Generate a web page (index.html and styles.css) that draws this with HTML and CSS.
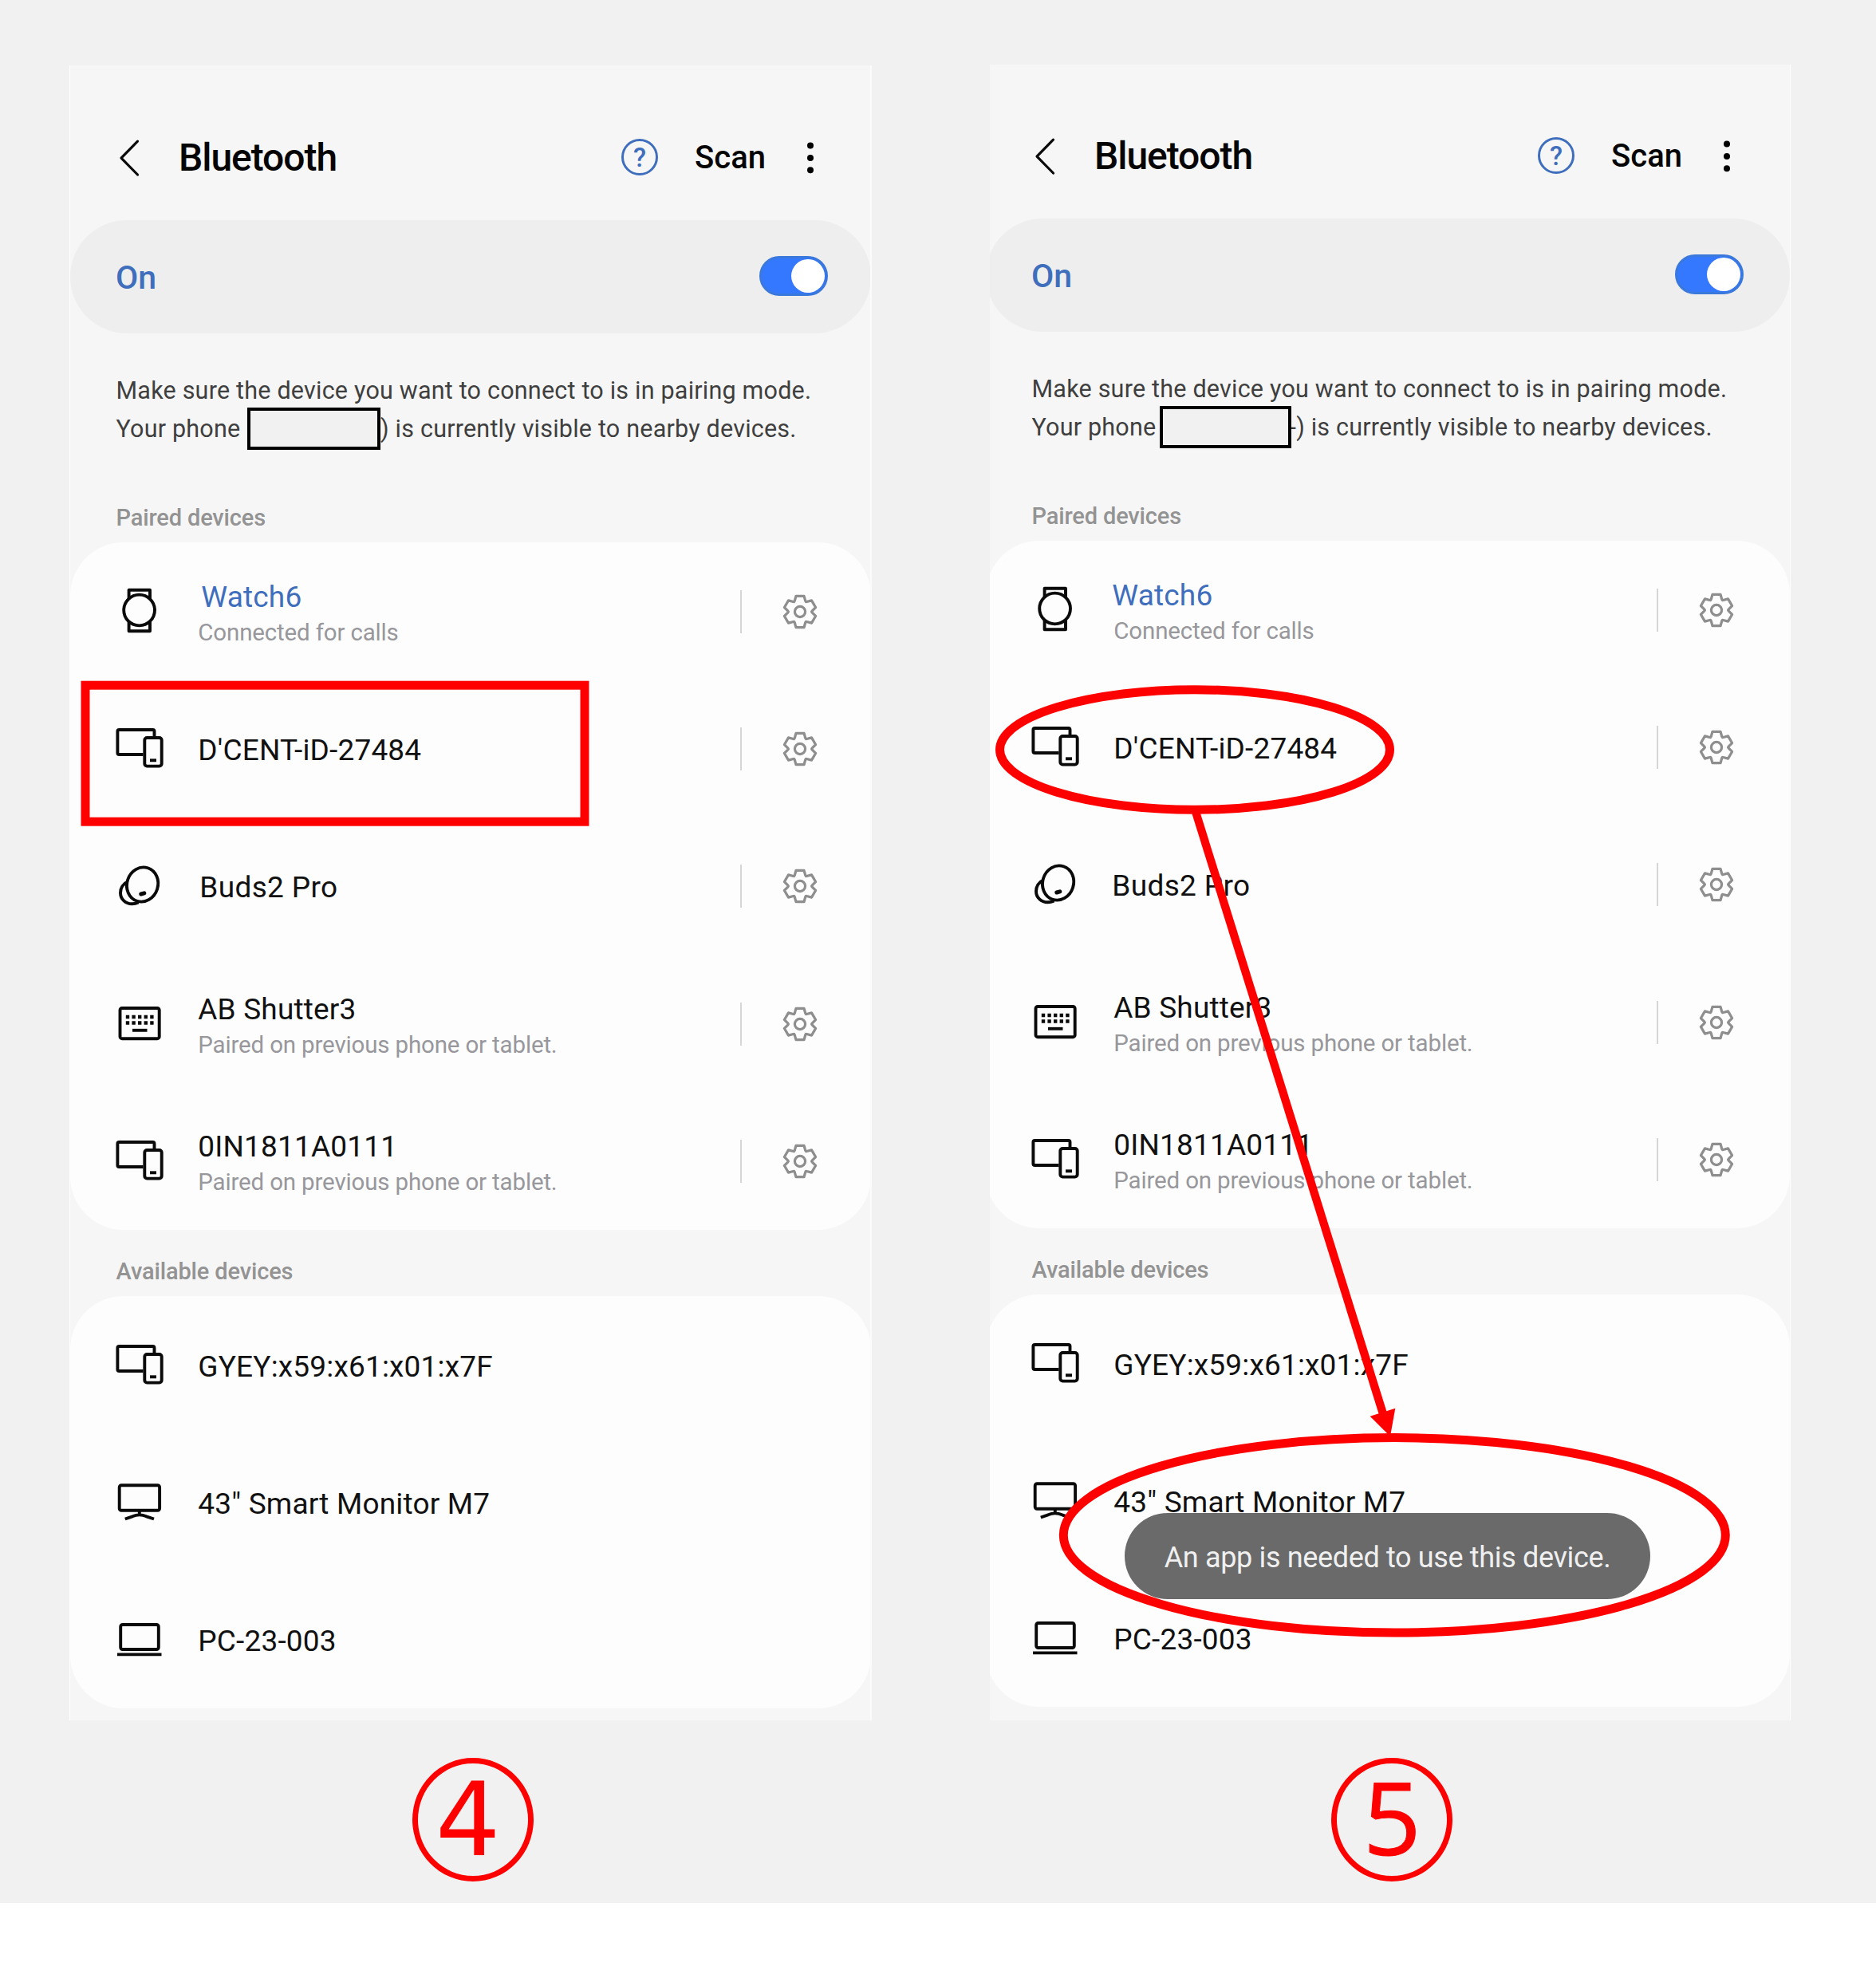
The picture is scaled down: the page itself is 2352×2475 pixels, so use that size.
FILE: index.html
```html
<!DOCTYPE html>
<html lang="en">
<head>
<meta charset="utf-8">
<title>Bluetooth pairing guide</title>
<link rel="stylesheet" href="styles.css">
</head>
<body>
<svg class="sprite" aria-hidden="true">
  <symbol id="back" viewBox="-32 -32 64 64"><path d="M10.5-20.8-10 .2 10.5 21"/></symbol>
  <symbol id="more" viewBox="-10 -32 20 64"><circle cy="-15.5" r="4"/><circle r="4"/><circle cy="15.3" r="4"/></symbol>
  <symbol id="watch" viewBox="-32 -32 64 64"><circle cx="-.4" cy="-2" r="19.4"/><path d="M-13.4-16.2V-27.2H13V-16.2M-13.4 12.4V24.2H13V12.4"/></symbol>
  <symbol id="devices" viewBox="-32 -32 64 64"><path d="M4.5 7H-25.5Q-27.6 7-27.6 5V-22Q-27.6-24-25.5-24H16.5Q18.5-24 18.5-22V-15"/><rect x="6.3" y="-14" width="21.4" height="35.6" rx="3"/><path d="M13 14.3h8"/></symbol>
  <symbol id="buds" viewBox="-32 -32 64 64"><ellipse cx="3.6" cy="-2" rx="19.4" ry="21.8" transform="rotate(18 3.6 -2)"/><path d="M-14.6-5.6C-21-3-24 3-24 8.5-24 16.5-17.5 22.3-9.5 22.3-6.5 22.3-4 21.6-1.5 20.4"/><path class="thick" d="M1.8 10 5.8 8.8"/></symbol>
  <symbol id="keyboard" viewBox="-32 -32 64 64"><rect x="-24.5" y="-20" width="49.2" height="38.2" rx="2.5"/><path class="keys" d="M-17.2-9H18M-17.2-1.5H18"/><path d="M-9 7.8H9.5"/></symbol>
  <symbol id="monitor" viewBox="-32 -32 64 64"><rect x="-25.3" y="-21.8" width="50.4" height="31.6" rx="2.5"/><path d="M-.2 10V15.5M-18.2 20.5-9 17.3Q-.2 13.5 8.6 17.3L18 20.5"/></symbol>
  <symbol id="laptop" viewBox="-32 -32 64 64"><rect x="-23.8" y="-19" width="47.6" height="31" rx="2.5"/><path d="M-28 18.4H27.5"/></symbol>
  <symbol id="gear" viewBox="-32 -32 64 64"><circle r="7.8"/><path d="M-8-16-6-23.3H6L8-16Q8.7-14.2 9.9-14.9L17.2-16.8 23.2-6.5 17.9-1.1Q16.7 0 17.9 1.1L23.2 6.5 17.2 16.8 9.9 14.9Q8.7 14.2 8 16L6 23.3H-6L-8 16Q-8.7 14.2-9.9 14.9L-17.2 16.8-23.2 6.5-17.9 1.1Q-16.7 0-17.9-1.1L-23.2-6.5-17.2-16.8-9.9-14.9Q-8.7-14.2-8-16Z"/></symbol>
</svg>

<main class="board">
  <section class="step">
    <div class="phone phone-a">
      <div class="screen">
        <header class="bar">
          <svg class="icon back"><use href="#back"/></svg>
          <h1 class="title">Bluetooth</h1>
          <span class="help">?</span>
          <span class="scan">Scan</span>
          <svg class="more"><use href="#more"/></svg>
        </header>
        <div class="power"><span class="on">On</span><span class="toggle"><i class="knob"></i></span></div>
        <div class="note">
          <div class="line">Make sure the device you want to connect to is in pairing mode.</div>
          <div class="line"><span class="lead">Your phone</span><span class="mask"></span><span class="tail">) is currently visible to nearby devices.</span></div>
        </div>
        <h2 class="label">Paired devices</h2>
        <ul class="card">
          <li class="row"><svg class="icon"><use href="#watch"/></svg><div class="text"><div class="name linked">Watch6</div><div class="sub">Connected for calls</div></div><svg class="icon gear"><use href="#gear"/></svg></li>
          <li class="row"><svg class="icon"><use href="#devices"/></svg><div class="text"><div class="name">D'CENT-iD-27484</div></div><svg class="icon gear"><use href="#gear"/></svg></li>
          <li class="row"><svg class="icon"><use href="#buds"/></svg><div class="text"><div class="name buds">Buds2 Pro</div></div><svg class="icon gear"><use href="#gear"/></svg></li>
          <li class="row"><svg class="icon"><use href="#keyboard"/></svg><div class="text"><div class="name">AB Shutter3</div><div class="sub">Paired on previous phone or tablet.</div></div><svg class="icon gear"><use href="#gear"/></svg></li>
          <li class="row"><svg class="icon"><use href="#devices"/></svg><div class="text"><div class="name">0IN1811A0111</div><div class="sub">Paired on previous phone or tablet.</div></div><svg class="icon gear"><use href="#gear"/></svg></li>
        </ul>
        <h2 class="label available">Available devices</h2>
        <ul class="card">
          <li class="row"><svg class="icon"><use href="#devices"/></svg><div class="text"><div class="name">GYEY:x59:x61:x01:x7F</div></div></li>
          <li class="row"><svg class="icon"><use href="#monitor"/></svg><div class="text"><div class="name">43" Smart Monitor M7</div></div></li>
          <li class="row"><svg class="icon"><use href="#laptop"/></svg><div class="text"><div class="name">PC-23-003</div></div></li>
        </ul>
      </div>
    </div>
    <div class="badge">4</div>
  </section>

  <section class="step">
    <div class="phone phone-b">
      <div class="screen">
        <header class="bar">
          <svg class="icon back"><use href="#back"/></svg>
          <h1 class="title">Bluetooth</h1>
          <span class="help">?</span>
          <span class="scan">Scan</span>
          <svg class="more"><use href="#more"/></svg>
        </header>
        <div class="power"><span class="on">On</span><span class="toggle"><i class="knob"></i></span></div>
        <div class="note">
          <div class="line">Make sure the device you want to connect to is in pairing mode.</div>
          <div class="line"><span class="lead">Your phone</span><span class="mask"></span><span class="tail">-) is currently visible to nearby devices.</span></div>
        </div>
        <h2 class="label">Paired devices</h2>
        <ul class="card">
          <li class="row"><svg class="icon"><use href="#watch"/></svg><div class="text"><div class="name linked">Watch6</div><div class="sub">Connected for calls</div></div><svg class="icon gear"><use href="#gear"/></svg></li>
          <li class="row"><svg class="icon"><use href="#devices"/></svg><div class="text"><div class="name">D'CENT-iD-27484</div></div><svg class="icon gear"><use href="#gear"/></svg></li>
          <li class="row"><svg class="icon"><use href="#buds"/></svg><div class="text"><div class="name buds">Buds2 Pro</div></div><svg class="icon gear"><use href="#gear"/></svg></li>
          <li class="row"><svg class="icon"><use href="#keyboard"/></svg><div class="text"><div class="name">AB Shutter3</div><div class="sub">Paired on previous phone or tablet.</div></div><svg class="icon gear"><use href="#gear"/></svg></li>
          <li class="row"><svg class="icon"><use href="#devices"/></svg><div class="text"><div class="name">0IN1811A0111</div><div class="sub">Paired on previous phone or tablet.</div></div><svg class="icon gear"><use href="#gear"/></svg></li>
        </ul>
        <h2 class="label available">Available devices</h2>
        <ul class="card">
          <li class="row"><svg class="icon"><use href="#devices"/></svg><div class="text"><div class="name">GYEY:x59:x61:x01:x7F</div></div></li>
          <li class="row"><svg class="icon"><use href="#monitor"/></svg><div class="text"><div class="name">43" Smart Monitor M7</div></div></li>
          <li class="row"><svg class="icon"><use href="#laptop"/></svg><div class="text"><div class="name">PC-23-003</div></div></li>
        </ul>
      </div>
    </div>
    <div class="badge badge-five">5</div>
  </section>

  <div class="toast">An app is needed to use this device.</div>
  <svg class="marks" viewBox="0 0 2352 2386">
    <rect x="107" y="859.2" width="626" height="171"/>
    <ellipse cx="1498" cy="940" rx="244.5" ry="75.3"/>
    <ellipse cx="1748.3" cy="1924.8" rx="415" ry="122.2"/>
    <path class="shaft" d="M1499.4 1019 1737.5 1784"/>
    <path class="head" d="M1743 1801 1717.6 1775.7 1749.3 1765.8Z"/>
  </svg>
</main>
</body>
</html>
```
FILE: styles.css
```css
* { box-sizing: border-box; }
body { margin: 0; background: #fff; font-family: "Roboto", sans-serif; color: #111; }
h1, h2, ul { margin: 0; padding: 0; font: inherit; list-style: none; }
.sprite { display: none; }

.board {
  position: relative;
  display: flex;
  align-items: flex-end;
  gap: 148px;
  width: 2352px;
  height: 2386px;
  padding: 0 0 27px 87px;
  background: #f1f1f1;
  box-shadow: 0 1px #fff, 0 3px #f6f6f6;
}

.phone { background: #f6f6f6; overflow: hidden; }
.phone-a { width: 1006px; height: 2075.5px; border-left: 1px solid #fff; border-right: 2px solid #fbfbfb; }
.phone-b { width: 1004px; height: 2076.5px; border-right: 1px solid #fff; }
.phone-a .screen { width: 1004px; }
.phone-b .screen { width: 1008px; margin-left: -5px; }

.bar { display: flex; align-items: center; height: 194px; padding: 38px 66px 0 42px; }
.phone-b .bar { height: 193px; padding: 37px 69px 0 42px; }
.icon { flex: none; width: 64px; height: 64px; fill: none; stroke: #0a0a0a; stroke-width: 3.9; stroke-linejoin: round; }
.thick { stroke-width: 5; stroke-linecap: round; }
.keys { stroke-width: 4.4; stroke-dasharray: 4.4 3.2; }
.icon.back { stroke-width: 3.2; stroke-linecap: round; }
.title { flex: 1; margin-left: 30px; font-size: 48px; font-weight: 500; letter-spacing: -1.05px; color: #050505; }
.help {
  width: 46px; height: 46px; margin: -2px 46px 0 0;
  border: 3px solid #3f6ebd; border-radius: 50%;
  color: #3f6ebd; font-size: 33px; font-weight: 500; line-height: 41px; text-align: center;
}
.scan { font-size: 40px; font-weight: 500; color: #050505; margin-right: 46px; }
.more { width: 20px; height: 64px; }

.power {
  display: flex; align-items: center; justify-content: space-between;
  height: 142.5px; padding: 0 54px 0 57px;
  border-radius: 71px; background: #eee;
}
.phone-b .power { padding: 0 58px 0 57px; }
.on { padding-top: 2px; color: #3f6ebd; font-size: 41px; font-weight: 500; }
.toggle {
  display: flex; justify-content: flex-end; width: 86px; height: 50px; margin-top: -1px; padding: 1px;
  border: 3px solid #3b78dc; border-radius: 25px; background: #3478ff;
}
.knob { width: 42px; height: 42px; border-radius: 50%; background: #fff; }

.note { margin-top: 48px; padding-left: 57.5px; color: #3f3f3f; font-size: 30.5px; letter-spacing: .21px; line-height: 47.6px; white-space: nowrap; }
.line { display: flex; align-items: center; height: 47.6px; }
.lead { width: 164px; }
.mask { z-index: 1; width: 167px; height: 53px; margin-right: .5px; border: 4px solid #000; background: #f1f1f1; }
.phone-b .lead { width: 160px; }
.phone-b .mask { width: 165px; margin-right: -2px; }

.label { margin: 68px 0 11px 57.5px; color: #939393; font-size: 29px; font-weight: 500; letter-spacing: -.14px; line-height: 40px; }
.label.available { margin-top: 32px; }

.card { padding-top: 1px; border-radius: 67px; background: #fdfdfd; }
.row { display: flex; align-items: center; height: 172.1px; padding: 0 57px 0 55px; }
.phone-b .row { padding: 0 60px 0 55px; }
.text { flex: 1; margin-left: 41.3px; padding-top: 4px; }
.name { font-size: 37px; letter-spacing: .18px; line-height: 44px; }
.sub { color: #97979c; font-size: 29.5px; letter-spacing: -.16px; line-height: 44px; }
.name:not(:last-child) { padding-top: 4px; }
.linked { color: #3f6ebd; margin-left: 4px; }
.phone-b .linked { margin-left: -2px; }
.buds { margin-left: 2px; letter-spacing: .35px; }
.phone-b .buds { margin-left: -2px; }
.gear { width: 107px; padding-left: 41px; border-left: 2px solid #d6d6d6; height: 54px; stroke: #8e8e8e; stroke-width: 3.8; overflow: visible; }

.badge {
  width: 152px; height: 155px; margin: 47px 0 0 430px; padding-left: 22px;
  border: 7.5px solid #f00; border-radius: 50%;
  color: #f00; font-family: "DejaVu Sans", sans-serif; font-size: 128px; line-height: 141px;
}
.badge-five {
  margin-left: 428px; padding-left: 33px;
  font-family: "Open Sans", "Noto Sans", sans-serif; font-size: 127px; font-weight: 500; line-height: 132px;
  -webkit-text-stroke: 1px #f00;
}

.toast {
  position: absolute; left: 1410px; top: 1896.5px; width: 659px; height: 108.5px;
  border-radius: 54px; background: #6a6a6a; color: #f0f0f0;
  font-size: 36px; letter-spacing: -.35px; line-height: 112px; text-align: center; white-space: nowrap;
}
.marks { position: absolute; inset: 0; width: 2352px; height: 2386px; fill: none; stroke: #f00; stroke-width: 11; }
.marks .shaft { stroke-width: 10.3; }
.marks .head { fill: #f00; stroke: none; }
```
